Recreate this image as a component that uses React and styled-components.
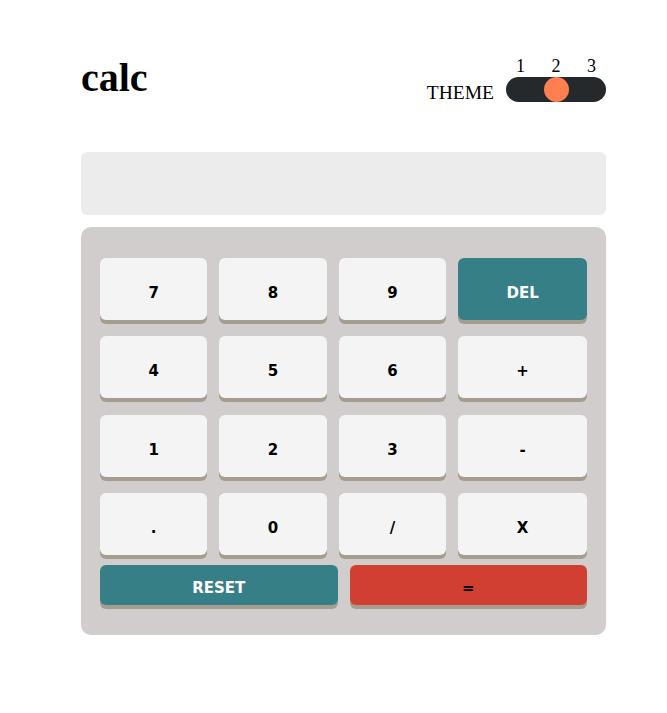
import React from "react";
import styled, { createGlobalStyle } from "styled-components";

const Global = createGlobalStyle`
  html, body { margin: 0; padding: 0; background: #ffffff; }
  body { font-family: "Liberation Serif", "Times New Roman", serif; color: #000; }
`;

const Page = styled.div`
  width: 667px;
  min-height: 713px;
  padding: 58px 0 0 81px;
  box-sizing: border-box;
`;

const Calculator = styled.div`
  width: 525px;
  display: flex;
  flex-direction: column;
`;

const Header = styled.header`
  display: flex;
  justify-content: space-between;
  align-items: flex-start;
  height: 44px;
`;

const Title = styled.h1`
  margin: 0;
  font-family: "Liberation Serif", serif;
  font-weight: 700;
  font-size: 40px;
  line-height: 40px;
`;

const ThemeGroup = styled.div`
  display: flex;
  align-items: flex-end;
  gap: 12px;
  margin-top: -1px;
`;

const ThemeLabel = styled.span`
  font-family: "Liberation Serif", serif;
  font-size: 19.5px;
  line-height: 19px;
`;

const Switch = styled.div`
  display: flex;
  flex-direction: column;
  width: 100px;
`;

const Numbers = styled.div`
  display: flex;
  justify-content: space-between;
  padding: 0 10px;
  font-family: "Liberation Serif", serif;
  font-size: 18px;
  line-height: 18px;
`;

const Track = styled.div`
  margin-top: 2px;
  height: 25px;
  border-radius: 13px;
  background: #25292c;
  display: flex;
  justify-content: ${(p) => (p.$pos === 0 ? "flex-start" : p.$pos === 2 ? "flex-end" : "center")};
  padding: 0 ${(p) => (p.$pos === 1 ? 0 : 3)}px;
`;

const Knob = styled.div`
  width: 25px;
  height: 25px;
  border-radius: 50%;
  background: #ff7f50;
`;

const Display = styled.div`
  margin-top: 50px;
  height: 63px;
  border-radius: 6px;
  background: #ececec;
`;

const Keypad = styled.div`
  margin-top: 12px;
  background: #d1cdcc;
  border-radius: 10px;
  padding: 31px 19px 30px;
  display: flex;
  flex-direction: column;
`;

const Grid = styled.div`
  display: grid;
  grid-template-columns: 1fr 1fr 1fr 1.2fr;
  grid-auto-rows: 62px;
  column-gap: 12px;
  row-gap: 16.33px;
`;

const BottomRow = styled.div`
  margin-top: 10px;
  display: grid;
  grid-template-columns: 1fr 1fr;
  column-gap: 12px;
`;

const variants = {
  light: { bg: "#f4f4f4", color: "#000000" },
  teal: { bg: "#377f86", color: "#ffffff" },
  red: { bg: "#d13f30", color: "#000000" },
};

const Key = styled.button`
  border: none;
  margin: 0;
  padding: ${(p) => (p.$short ? "7px" : "8px")} 0 0;
  height: ${(p) => (p.$short ? "40px" : "62px")};
  border-radius: 6px;
  background: ${(p) => variants[p.$variant].bg};
  color: ${(p) => variants[p.$variant].color};
  box-shadow: 0 4px 0 #a69d91;
  font-family: "DejaVu Sans", Verdana, sans-serif;
  font-weight: 700;
  font-size: 15px;
  display: flex;
  align-items: center;
  justify-content: center;
  cursor: pointer;
`;

const keys = [
  ["7", "light"], ["8", "light"], ["9", "light"], ["DEL", "teal"],
  ["4", "light"], ["5", "light"], ["6", "light"], ["+", "light"],
  ["1", "light"], ["2", "light"], ["3", "light"], ["-", "light"],
  [".", "light"], ["0", "light"], ["/", "light"], ["X", "light"],
];

export default function App() {
  return (
    <>
      <Global />
      <Page>
        <Calculator>
          <Header>
            <Title>calc</Title>
            <ThemeGroup>
              <ThemeLabel>THEME</ThemeLabel>
              <Switch>
                <Numbers>
                  <span>1</span>
                  <span>2</span>
                  <span>3</span>
                </Numbers>
                <Track $pos={1}>
                  <Knob />
                </Track>
              </Switch>
            </ThemeGroup>
          </Header>
          <Display />
          <Keypad>
            <Grid>
              {keys.map(([label, v]) => (
                <Key key={label} $variant={v}>{label}</Key>
              ))}
            </Grid>
            <BottomRow>
              <Key $variant="teal" $short>RESET</Key>
              <Key $variant="red" $short>=</Key>
            </BottomRow>
          </Keypad>
        </Calculator>
      </Page>
    </>
  );
}
